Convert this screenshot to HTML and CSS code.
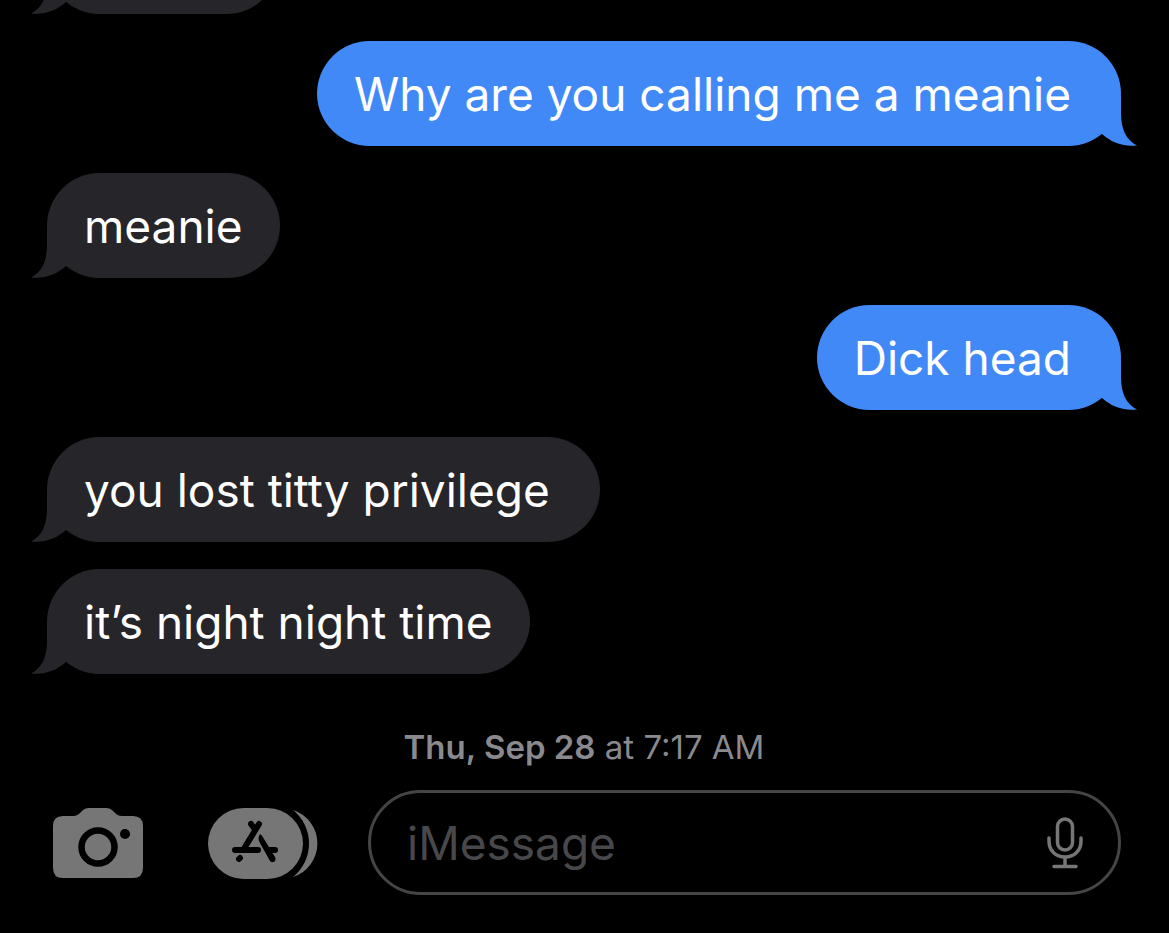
FILE: index.html
```
<!DOCTYPE html>
<html lang="en">
<head>
<meta charset="UTF-8">
<meta name="viewport" content="width=device-width, initial-scale=1.0">
<title>Messages</title>
<link rel="stylesheet" href="styles.css">
</head>
<body>

<svg class="defs" aria-hidden="true">
    <symbol id="tail" viewBox="0 0 36 50">
        <path d="M16 0V17C16 33 11 44 0 49.5C13 51 25 47 35 38L36 0Z"/>
    </symbol>
</svg>

<main class="chat">
    <div class="message received cut-off"><svg class="tail"><use href="#tail"/></svg></div>
    <div class="message sent">Why are you calling me a meanie<svg class="tail"><use href="#tail"/></svg></div>
    <div class="message received">meanie<svg class="tail"><use href="#tail"/></svg></div>
    <div class="message sent">Dick head<svg class="tail"><use href="#tail"/></svg></div>
    <div class="message received roomy">you lost titty privilege<svg class="tail"><use href="#tail"/></svg></div>
    <div class="message received">it’s night night time<svg class="tail"><use href="#tail"/></svg></div>
    <div class="timestamp"><b>Thu, Sep 28</b> at 7:17 AM</div>
</main>

<form class="composer">
    <button type="button" class="camera" aria-label="Camera">
        <svg width="90" height="71" viewBox="0 -1 90 71">
            <path fill="#767676" d="M10 8H20C23 8 25 7 27 5L29 3C31 1 33 0 36 0H53C56 0 58 1 60 3L62 5C64 7 66 8 69 8H80Q90 8 90 18V60Q90 70 80 70H10Q0 70 0 60V18Q0 8 10 8Z"/>
            <circle cx="45" cy="39" r="16.5" fill="none" stroke="#000" stroke-width="6.5"/>
            <circle cx="72" cy="26" r="5" fill="#000"/>
        </svg>
    </button>
    <button type="button" class="apps" aria-label="Apps">
        <svg width="110" height="73" viewBox="0 -2 110 73">
            <path fill="#767676" d="M85 2A35.2 35.2 0 0 1 85 69A43 43 0 0 0 85 2Z"/>
            <rect width="95" height="71" rx="35.5" fill="#767676"/>
            <path d="M51 16L37 39M43 16L46 20M27 42H50M62 42H67M31 51L32 50" fill="none" stroke="#000" stroke-width="6" stroke-linecap="round"/>
            <path fill="#000" d="M52 26C50 29 50 32 52 35L62 53C65 56 69 53 67 49L56 31Q54 27 52 26Z"/>
        </svg>
    </button>
    <div class="field">
        <input type="text" placeholder="iMessage" aria-label="iMessage">
        <button type="button" class="mic" aria-label="Dictate">
            <svg width="36" height="52" viewBox="0 0 36 52">
                <g fill="none" stroke="#767676" stroke-width="3.5" stroke-linecap="round">
                    <rect x="10.5" y="2" width="15" height="31" rx="7.5"/>
                    <path d="M2 21V24C2 34 9 40 18 40S34 34 34 24V21M18 40V49M7 49.5H29"/>
                </g>
            </svg>
        </button>
    </div>
</form>

</body>
</html>
```
FILE: styles.css
```
* {
    box-sizing: border-box;
}

body {
    margin: 0;
    height: 100vh;
    display: flex;
    flex-direction: column;
    overflow: hidden;
    background-color: #000;
    color: #fff;
    font-family: Inter, "Liberation Sans", sans-serif;
}

.defs {
    position: absolute;
    width: 0;
    height: 0;
}

.chat {
    flex: 1;
    min-height: 0;
    display: flex;
    flex-direction: column;
    justify-content: flex-end;
    gap: 27px;
    padding: 0 48px 23px 47px;
}

.message {
    position: relative;
    flex-shrink: 0;
    height: 105px;
    padding: 0 37px;
    border-radius: 53px;
    font-size: 46px;
    line-height: 106px;
    white-space: nowrap;
}

.received {
    align-self: flex-start;
    background-color: #26252a;
    fill: #26252a;
}

.sent {
    align-self: flex-end;
    background-color: #4189f6;
    fill: #4189f6;
}

.sent,
.roomy {
    padding-right: 50px;
}

/* older message, scrolled off the top */
.cut-off {
    width: 232px;
}

.tail {
    position: absolute;
    left: -16px;
    bottom: 0;
    width: 36px;
    height: 50px;
}

.sent .tail {
    left: auto;
    right: -16px;
    transform: scaleX(-1);
}

.timestamp {
    flex-shrink: 0;
    margin-top: 26px;
    color: #8a8a8e;
    font-size: 33px;
    line-height: 40px;
    text-align: center;
}

.timestamp b {
    font-weight: 600;
}

.composer {
    display: flex;
    align-items: center;
    padding: 0 48px 38px 53px;
}

button {
    padding: 0;
    border: none;
    background: none;
    cursor: pointer;
}

button svg {
    display: block;
}

.camera {
    margin-right: 65px;
}

.apps {
    margin-right: 50px;
}

.field {
    flex: 1;
    min-width: 0;
    height: 105px;
    display: flex;
    align-items: center;
    padding: 0 35px 0 36px;
    border: 3px solid #454547;
    border-radius: 53px;
}

.field input {
    flex: 1;
    min-width: 0;
    padding: 0;
    border: none;
    outline: none;
    background: none;
    color: #fff;
    font-family: inherit;
    font-size: 46px;
}

.field input::placeholder {
    color: #48484a;
    opacity: 1;
}
```
